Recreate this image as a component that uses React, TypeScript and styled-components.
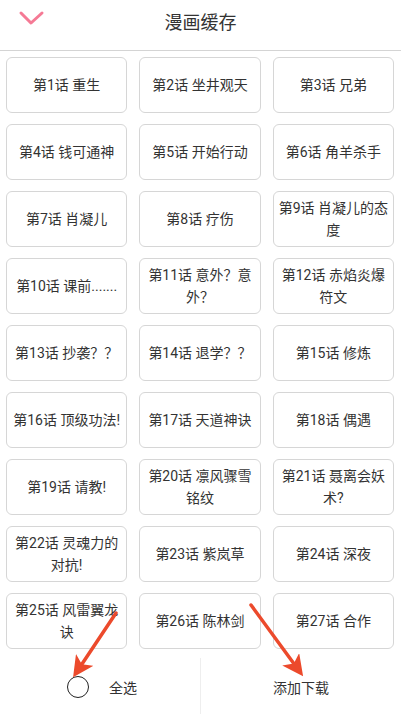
import styled, { createGlobalStyle } from "styled-components";

const GlobalStyle = createGlobalStyle`
  html, body {
    margin: 0;
    padding: 0;
    background: #fff;
  }
  body {
    font-family: "Roboto", "Noto Sans CJK SC", sans-serif;
    color: #333;
  }
`;

const Page = styled.div`
  position: relative;
  display: flex;
  flex-direction: column;
  width: 401px;
  height: 714px;
  overflow: hidden;
`;

const Header = styled.div`
  position: relative;
  display: flex;
  align-items: center;
  justify-content: center;
  height: 50px;
  border-bottom: 1px solid #d4d4d4;
  flex-shrink: 0;
`;

const BackIcon = styled.svg`
  position: absolute;
  left: 18px;
  top: 10px;
`;

const Title = styled.h1`
  margin: 0 0 9px;
  font-size: 18px;
  font-weight: normal;
  color: #333;
`;

const Grid = styled.div`
  flex: 1;
  display: grid;
  grid-template-columns: repeat(3, 1fr);
  grid-auto-rows: 56px;
  column-gap: 12px;
  row-gap: 11px;
  padding: 6px 7px 0 6px;
  overflow: hidden;
  align-content: start;
`;

const Chapter = styled.div`
  display: flex;
  align-items: center;
  justify-content: center;
  text-align: center;
  padding: 0 3px;
  border: 1px solid #d6d6d6;
  border-radius: 6px;
  font-size: 14px;
  line-height: 22px;
  color: #333;
`;

const Footer = styled.div`
  display: flex;
  height: 56px;
  flex-shrink: 0;
`;

const FooterHalf = styled.div<{ $divider?: boolean }>`
  flex: 1;
  display: flex;
  align-items: center;
  justify-content: center;
  gap: 20px;
  font-size: 14px;
  color: #333;
  border-left: ${(p) => (p.$divider ? "1px solid #eee" : "none")};
  padding-top: 2px;
`;

const Radio = styled.span`
  width: 20px;
  height: 20px;
  border: 1.5px solid #222;
  border-radius: 50%;
  margin-left: 4px;
`;

const Arrows = styled.svg`
  position: absolute;
  left: 0;
  top: 0;
  pointer-events: none;
`;

const chapters = [
  "第1话 重生",
  "第2话 坐井观天",
  "第3话 兄弟",
  "第4话 钱可通神",
  "第5话 开始行动",
  "第6话 角羊杀手",
  "第7话 肖凝儿",
  "第8话 疗伤",
  "第9话 肖凝儿的态度",
  "第10话 课前.......",
  "第11话 意外？意外？",
  "第12话 赤焰炎爆符文",
  "第13话 抄袭？？",
  "第14话 退学？？",
  "第15话 修炼",
  "第16话 顶级功法!",
  "第17话 天道神诀",
  "第18话 偶遇",
  "第19话 请教!",
  "第20话 凛风骤雪铭纹",
  "第21话 聂离会妖术?",
  "第22话 灵魂力的对抗!",
  "第23话 紫岚草",
  "第24话 深夜",
  "第25话 风雷翼龙诀",
  "第26话 陈林剑",
  "第27话 合作",
];

const App = () => {
  return (
    <Page>
      <GlobalStyle />
      <Header>
        <BackIcon width="28" height="18" viewBox="0 0 28 18">
          <path
            d="M3 3 L13 13 L24 3"
            fill="none"
            stroke="#f57a95"
            strokeWidth="3"
            strokeLinecap="round"
            strokeLinejoin="round"
          />
        </BackIcon>
        <Title>漫画缓存</Title>
      </Header>
      <Grid>
        {chapters.map((c, i) => (
          <Chapter key={i}>{c}</Chapter>
        ))}
      </Grid>
      <Footer>
        <FooterHalf>
          <Radio />
          <span>全选</span>
        </FooterHalf>
        <FooterHalf $divider>添加下载</FooterHalf>
      </Footer>
      <Arrows width="401" height="714" viewBox="0 0 401 714">
        <defs>
          <marker
            id="head"
            markerWidth="6"
            markerHeight="6"
            refX="4.5"
            refY="3"
            orient="auto"
            markerUnits="strokeWidth"
          >
            <path d="M0 0 L6 3 L0 6 L1.5 3 Z" fill="#ec4a2c" />
          </marker>
        </defs>
        <line x1="116" y1="613" x2="76" y2="673" stroke="#ec4a2c" strokeWidth="3.5" strokeLinecap="round" markerEnd="url(#head)" />
        <line x1="251" y1="605" x2="300" y2="672" stroke="#ec4a2c" strokeWidth="3.5" strokeLinecap="round" markerEnd="url(#head)" />
      </Arrows>
    </Page>
  );
};

export default App;
